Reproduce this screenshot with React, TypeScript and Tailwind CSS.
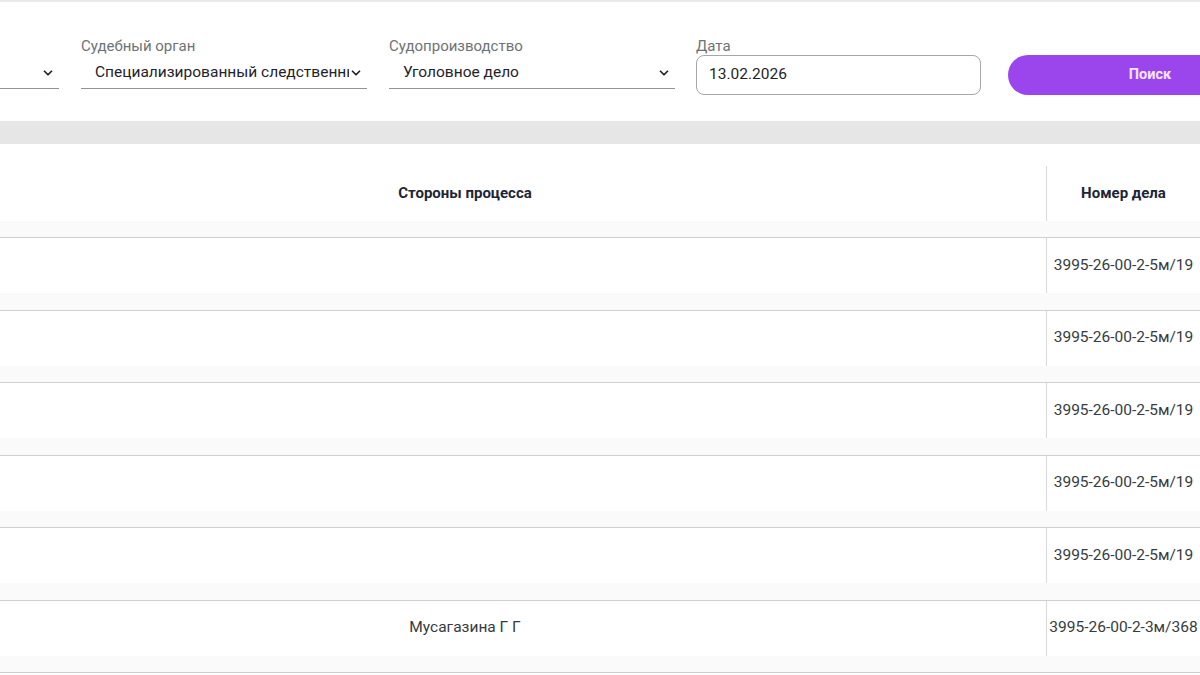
import { ChevronDown } from "lucide-react";

const rows = [
    { parties: "", number: "3995-26-00-2-5м/19" },
    { parties: "", number: "3995-26-00-2-5м/19" },
    { parties: "", number: "3995-26-00-2-5м/19" },
    { parties: "", number: "3995-26-00-2-5м/19" },
    { parties: "", number: "3995-26-00-2-5м/19" },
    { parties: "Мусагазина Г Г", number: "3995-26-00-2-3м/368" },
];

const SelectField = ({ label, value }: { label: string; value: string }) => (
    <div className="w-[286px] shrink-0 flex flex-col">
        <span className="text-[15px] leading-5 text-[#6e7277] h-5 whitespace-nowrap">{label}</span>
        <div className="h-[32px] mt-[1px] flex items-center justify-between pl-[14px] pr-[4px] border-b border-[#8f949a]">
            <span className="text-[15.5px] text-[#1f2328] whitespace-nowrap overflow-hidden">{value}</span>
            <ChevronDown size={14} strokeWidth={3} className="text-[#1f2328] shrink-0" />
        </div>
    </div>
);

export default function App() {
    return (
        <div
            className="w-[1200px] h-[675px] overflow-hidden bg-white border-t-2 border-[#ebebeb]"
            style={{ fontFamily: "Roboto, 'Noto Sans', sans-serif" }}
        >
            {/* filters */}
            <div className="flex items-start ml-[-227px] pt-[34px] h-[119px]">
                <div className="flex gap-[22px]">
                    <SelectField label="" value="" />
                    <SelectField label="Судебный орган" value="Специализированный следственный суд" />
                    <SelectField label="Судопроизводство" value="Уголовное дело" />
                </div>
                <div className="w-[285px] shrink-0 ml-[21px] flex flex-col">
                    <span className="text-[15px] leading-5 text-[#6e7277] h-5">Дата</span>
                    <div className="h-[40px] mt-[-1px] rounded-lg border border-[#a3a7ad] flex items-center px-3 text-[15.5px] text-[#1f2328]">
                        13.02.2026
                    </div>
                </div>
                <button className="w-[284px] h-[40px] shrink-0 ml-[27px] mt-[19px] rounded-full bg-[#9b46ed] text-[#f3e6ff] text-[14.5px] font-bold">
                    Поиск
                </button>
            </div>

            <div className="h-[23px] bg-[#e6e6e6]" />

            {/* table */}
            <div className="ml-[-116px] w-[1316px]">
                <div className="border-b border-[#cfcfcf]">
                    <div className="flex pt-[22px] h-[77px]">
                        <div className="w-[1162px] flex items-center justify-center text-[15px] font-bold text-[#1c2536]">
                            Стороны процесса
                        </div>
                        <div className="w-[154px] border-l border-[#d8d8d8] flex items-center justify-center text-[15px] font-bold text-[#1c2536]">
                            Номер дела
                        </div>
                    </div>
                    <div className="h-[16px] bg-[#fafafa]" />
                </div>
                {rows.map((r, i) => (
                    <div key={i} className="border-b border-[#cfcfcf]">
                        <div className="flex h-[55px]">
                            <div className="w-[1162px] flex items-center justify-center text-[15.5px] text-[#363b41]">
                                {r.parties}
                            </div>
                            <div className="w-[154px] border-l border-[#d8d8d8] flex items-center justify-center text-[15.5px] text-[#363b41] whitespace-nowrap">
                                {r.number}
                            </div>
                        </div>
                        <div className="h-[16.5px] bg-[#fafafa]" />
                    </div>
                ))}
            </div>
        </div>
    );
}
